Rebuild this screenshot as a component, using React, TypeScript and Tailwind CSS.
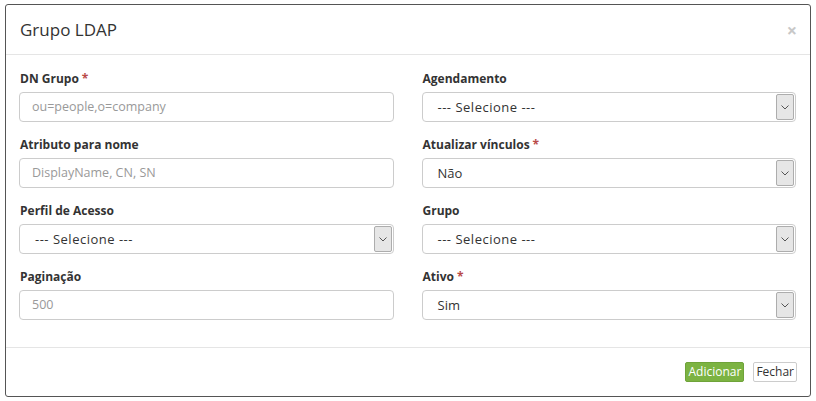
import React from "react";

const Star = () => <span className="text-[#b94a48] ml-[3px]">*</span>;

function Label({ text, req }: { text: string; req?: boolean }) {
  return (
    <div className="h-[16px] leading-[16px] text-[12px] font-bold text-[#333] pl-[1px]">
      {text}
      {req && <Star />}
    </div>
  );
}

function Input({ placeholder }: { placeholder: string }) {
  return (
    <div className="mt-[5px] h-[30px] border border-[#ccc] rounded-[4px] bg-white flex items-center pl-[12px] pt-[1px] text-[12.5px] text-[#999]">
      {placeholder}
    </div>
  );
}

function Select({ value, wide }: { value: string; wide?: boolean }) {
  return (
    <div className="mt-[5px] h-[30px] border border-[#ccc] rounded-[4px] bg-white flex items-stretch">
      <div
        className={
          wide
            ? "flex-1 flex items-center pl-[15px] pt-[1px] text-[13px] text-[#333] tracking-[0.5px]"
            : "flex-1 flex items-center pl-[15px] pt-[1px] text-[13px] text-[#333]"
        }
      >
        {value}
      </div>
      <div className="w-[18px] my-[1px] mr-[1px] bg-[#e6e6e6] border border-[#adadad] rounded-[2px] flex items-center justify-center">
        <svg width="8" height="5" viewBox="0 0 8 5">
          <path d="M0.5 0.5 L4 4 L7.5 0.5" fill="none" stroke="#555" strokeWidth="1" />
        </svg>
      </div>
    </div>
  );
}

function Group({ children }: { children: React.ReactNode }) {
  return <div className="mb-[15px]">{children}</div>;
}

export default function App() {
  return (
    <div
      className="w-[816px] h-[401px] bg-white pt-[4px] pl-[5px]"
      style={{ fontFamily: '"Open Sans", "Noto Sans", sans-serif' }}
    >
      <div className="w-[806px] h-[393px] border border-[#555] rounded-[3px] bg-white flex flex-col">
        <div className="h-[50px] shrink-0 border-b border-[#e5e5e5] flex items-center justify-between pl-[14px] pr-[13px]">
          <div className="text-[17px] text-[#333] leading-none">Grupo LDAP</div>
          <div className="text-[18px] text-[#c8c8c8] font-bold leading-none">×</div>
        </div>
        <div className="pt-[16px] pl-[13px] pr-[14px] pb-[12px] grid grid-cols-2 gap-x-[28px] border-b border-[#e5e5e5]">
          <div>
            <Group>
              <Label text="DN Grupo" req />
              <Input placeholder="ou=people,o=company" />
            </Group>
            <Group>
              <Label text="Atributo para nome" />
              <Input placeholder="DisplayName, CN, SN" />
            </Group>
            <Group>
              <Label text="Perfil de Acesso" />
              <Select value="--- Selecione ---" wide />
            </Group>
            <Group>
              <Label text="Paginação" />
              <Input placeholder="500" />
            </Group>
          </div>
          <div>
            <Group>
              <Label text="Agendamento" />
              <Select value="--- Selecione ---" wide />
            </Group>
            <Group>
              <Label text="Atualizar vínculos" req />
              <Select value="Não" />
            </Group>
            <Group>
              <Label text="Grupo" />
              <Select value="--- Selecione ---" wide />
            </Group>
            <Group>
              <Label text="Ativo" req />
              <Select value="Sim" />
            </Group>
          </div>
        </div>
        <div className="flex justify-end gap-[9px] pr-[13px] pt-[14px]">
          <div className="h-[20px] px-[2px] bg-[#7cb342] border border-[#6fa33a] rounded-[2px] text-white text-[12px] flex items-center">
            Adicionar
          </div>
          <div className="h-[20px] px-[2px] bg-white border border-[#ccc] rounded-[2px] text-[#333] text-[12px] flex items-center">
            Fechar
          </div>
        </div>
      </div>
    </div>
  );
}
